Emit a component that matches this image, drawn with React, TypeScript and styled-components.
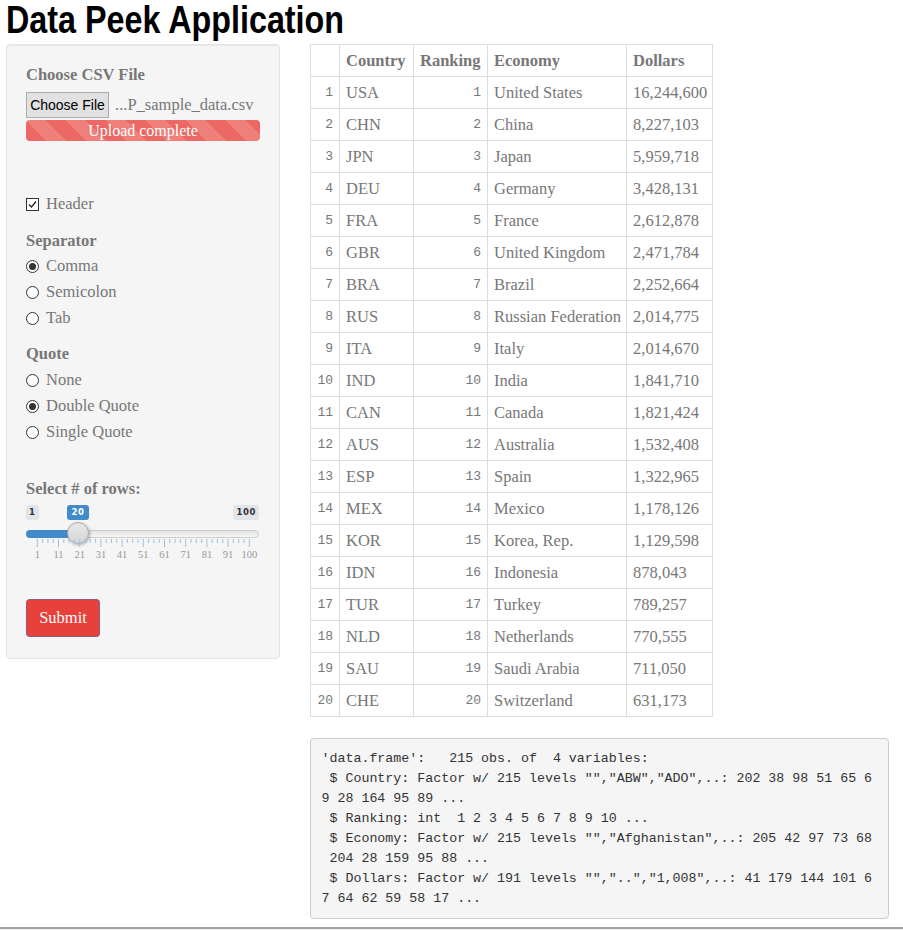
import React from "react";
import styled, { createGlobalStyle } from "styled-components";

const Global = createGlobalStyle`
  html, body { margin: 0; padding: 0; background: #fff; }
  body { font-family: "Liberation Serif", "Times New Roman", serif; color: #777; }
  * { box-sizing: border-box; }
`;

const Page = styled.div`
  width: 903px;
  padding: 0 6px;
`;

const Title = styled.h1`
  margin: 0;
  height: 44px;
  font-family: "Liberation Sans", Arial, sans-serif;
  font-size: 38px;
  line-height: 40px;
  font-weight: bold;
  color: #000;
  white-space: nowrap;
  transform: scaleX(0.85);
  transform-origin: 0 0;
`;

const Layout = styled.div`
  display: flex;
  align-items: flex-start;
  gap: 30px;
`;

const Sidebar = styled.form`
  width: 274px;
  background: #f5f5f5;
  border: 1px solid #e3e3e3;
  border-radius: 4px;
  box-shadow: inset 0 1px 1px rgba(0, 0, 0, 0.05);
  padding: 20px 19px 21px;
  display: flex;
  flex-direction: column;
`;

const Label = styled.div`
  font-weight: bold;
  font-size: 16.5px;
  line-height: 20px;
  color: #777;
`;

const FileRow = styled.div`
  display: flex;
  align-items: center;
  gap: 6px;
  margin-top: 7px;
`;

const FileButton = styled.span`
  width: 83px;
  height: 26px;
  display: flex;
  align-items: center;
  justify-content: center;
  font-family: "Liberation Sans", Arial, sans-serif;
  font-size: 14px;
  color: #000;
  background: #e1e1e1;
  border: 1px solid #adadad;
`;

const FileName = styled.span`
  font-size: 16.5px;
  color: #777;
`;

const Progress = styled.div`
  margin-top: 2px;
  height: 21px;
  border-radius: 4px;
  background-color: #eb6864;
  background-image: linear-gradient(
    45deg,
    rgba(255, 255, 255, 0.15) 25%,
    transparent 25%,
    transparent 50%,
    rgba(255, 255, 255, 0.15) 50%,
    rgba(255, 255, 255, 0.15) 75%,
    transparent 75%,
    transparent
  );
  background-size: 40px 40px;
  color: #fff;
  font-size: 16px;
  line-height: 21px;
  text-align: center;
`;

const Option = styled.label<{ $mt?: number }>`
  display: flex;
  align-items: center;
  gap: 7px;
  height: 20px;
  font-size: 16.5px;
  color: #777;
  margin-top: ${(p) => p.$mt ?? 0}px;
`;

const Box = styled.span`
  width: 13px;
  height: 13px;
  border: 1px solid #333;
  background: #fff;
  display: flex;
  align-items: center;
  justify-content: center;
`;

const Circle = styled.span<{ $on?: boolean }>`
  width: 13px;
  height: 13px;
  border-radius: 50%;
  border: 1px solid #333;
  background: #fff;
  display: flex;
  align-items: center;
  justify-content: center;
  &::after {
    content: "";
    width: 7px;
    height: 7px;
    border-radius: 50%;
    background: ${(p) => (p.$on ? "#333" : "transparent")};
  }
`;

const Group = styled.div<{ $mt: number }>`
  margin-top: ${(p) => p.$mt}px;
  display: flex;
  flex-direction: column;
`;

const Options = styled.div<{ $mt: number }>`
  margin-top: ${(p) => p.$mt}px;
  display: flex;
  flex-direction: column;
  gap: 6px;
`;

const Slider = styled.div`
  position: relative;
  height: 64px;
  width: 233px;
`;

const Bubble = styled.span<{ $active?: boolean }>`
  position: absolute;
  top: 6px;
  height: 15px;
  padding: 0 3px;
  border-radius: 3px;
  font-family: "DejaVu Sans", Verdana, sans-serif;
  font-size: 8.5px;
  font-weight: bold;
  line-height: 15px;
  letter-spacing: 0.6px;
  text-align: center;
  color: ${(p) => (p.$active ? "#fff" : "#333")};
  background: ${(p) => (p.$active ? "#428bca" : "#e1e4e9")};
`;

const Track = styled.div`
  position: absolute;
  left: 0;
  top: 31px;
  width: 233px;
  height: 8px;
  border-radius: 4px;
  background: linear-gradient(#e4e4e4, #f6f6f6);
  border: 1px solid #cfcfcf;
`;

const Fill = styled.div`
  position: absolute;
  left: 0;
  top: 31px;
  height: 8px;
  border-radius: 4px 0 0 4px;
  background: #428bca;
`;

const Handle = styled.div`
  position: absolute;
  top: 23px;
  width: 22px;
  height: 22px;
  border-radius: 50%;
  background: linear-gradient(#e8e8e8, #d6d6d6);
  border: 1px solid #aaa;
  box-shadow: 1px 1px 3px rgba(0, 0, 0, 0.3);
`;

const Ticks = styled.svg`
  position: absolute;
  left: 0;
  top: 40px;
`;

const TickLabel = styled.span`
  position: absolute;
  top: 51px;
  width: 24px;
  margin-left: -12px;
  text-align: center;
  font-size: 10.5px;
  line-height: 10px;
  color: #999;
`;

const Submit = styled.button`
  margin-top: 36px;
  width: 74px;
  height: 38px;
  flex: none;
  background: #e8403b;
  color: #fff;
  border: 1px dotted #2b7bd6;
  border-radius: 4px;
  font-family: "Liberation Serif", serif;
  font-size: 16.5px;
  padding: 0;
`;

const Main = styled.div`
  display: flex;
  flex-direction: column;
`;

const Table = styled.table`
  border-collapse: collapse;
  table-layout: fixed;
  width: 402px;
  font-size: 16.5px;
  color: #777;
  th,
  td {
    border: 1px solid #ddd;
    padding: 0 6px;
    white-space: nowrap;
    overflow: hidden;
  }
  th {
    height: 32px;
    text-align: left;
    font-weight: bold;
  }
  td {
    height: 32px;
  }
`;

const Num = styled.td`
  && {
    font-family: "Liberation Mono", "Courier New", monospace;
    font-size: 13px;
    text-align: right;
  }
`;

const Pre = styled.pre`
  margin: 21px 0 0;
  width: 579px;
  background: #f5f5f5;
  border: 1px solid #ccc;
  border-radius: 4px;
  padding: 9.5px 10.5px;
  font-family: "Liberation Mono", "Courier New", monospace;
  font-size: 13.3px;
  line-height: 20px;
  color: #333;
  white-space: pre;
`;

const Footer = styled.div`
  margin-top: 8px;
  border-top: 2px solid #a3a3a3;
  background: #f0f0f0;
  height: 20px;
  padding-left: 6px;
  overflow: hidden;
  font-family: "Liberation Mono", monospace;
  font-size: 13px;
  line-height: 15px;
  color: #c00000;
`;

const FooterText = styled.div`
  margin-top: -1px;
`;

const rows: [string, string, string][] = [
  ["USA", "United States", "16,244,600"],
  ["CHN", "China", "8,227,103"],
  ["JPN", "Japan", "5,959,718"],
  ["DEU", "Germany", "3,428,131"],
  ["FRA", "France", "2,612,878"],
  ["GBR", "United Kingdom", "2,471,784"],
  ["BRA", "Brazil", "2,252,664"],
  ["RUS", "Russian Federation", "2,014,775"],
  ["ITA", "Italy", "2,014,670"],
  ["IND", "India", "1,841,710"],
  ["CAN", "Canada", "1,821,424"],
  ["AUS", "Australia", "1,532,408"],
  ["ESP", "Spain", "1,322,965"],
  ["MEX", "Mexico", "1,178,126"],
  ["KOR", "Korea, Rep.", "1,129,598"],
  ["IDN", "Indonesia", "878,043"],
  ["TUR", "Turkey", "789,257"],
  ["NLD", "Netherlands", "770,555"],
  ["SAU", "Saudi Arabia", "711,050"],
  ["CHE", "Switzerland", "631,173"],
];

const preText = `'data.frame':   215 obs. of  4 variables:
 $ Country: Factor w/ 215 levels "","ABW","ADO",..: 202 38 98 51 65 6
9 28 164 95 89 ...
 $ Ranking: int  1 2 3 4 5 6 7 8 9 10 ...
 $ Economy: Factor w/ 215 levels "","Afghanistan",..: 205 42 97 73 68
 204 28 159 95 88 ...
 $ Dollars: Factor w/ 191 levels "","..","1,008",..: 41 179 144 101 6
7 64 62 59 58 17 ...`;

const tickStart = 11.3;
const tickEnd = 223.3;
const tickLabels = ["1", "11", "21", "31", "41", "51", "61", "71", "81", "91", "100"];

function SliderInput() {
  const lines = [];
  for (let i = 0; i <= 40; i++) {
    const x = tickStart + ((tickEnd - tickStart) * i) / 40;
    const major = i % 4 === 0;
    lines.push(
      <line key={i} x1={x} x2={x} y1={0} y2={major ? 8 : 4} stroke="#9dc1e3" strokeWidth={1} />
    );
  }
  const value = 20;
  const pos = tickStart + ((tickEnd - tickStart) * (value - 1)) / 99;
  return (
    <Slider>
      <Bubble style={{ left: 0 }}>1</Bubble>
      <Bubble $active style={{ left: pos - 11, width: 22 }}>20</Bubble>
      <Bubble style={{ right: 0 }}>100</Bubble>
      <Track />
      <Fill style={{ width: pos }} />
      <Handle style={{ left: pos - 11 }} />
      <Ticks width={233} height={9}>{lines}</Ticks>
      {tickLabels.map((t, i) => (
        <TickLabel key={t} style={{ left: tickStart + ((tickEnd - tickStart) * i) / 10 }}>
          {t}
        </TickLabel>
      ))}
    </Slider>
  );
}

export default function App() {
  return (
    <>
      <Global />
      <Page>
        <Title>Data Peek Application</Title>
        <Layout>
          <Sidebar>
            <Label>Choose CSV File</Label>
            <FileRow>
              <FileButton>Choose File</FileButton>
              <FileName>...P_sample_data.csv</FileName>
            </FileRow>
            <Progress>Upload complete</Progress>

            <Option $mt={53}>
              <Box>
                <svg width="9" height="9" viewBox="0 0 9 9">
                  <path d="M1 4.5 L3.5 7 L8 1.5" fill="none" stroke="#222" strokeWidth="1.3" />
                </svg>
              </Box>
              Header
            </Option>

            <Group $mt={17}>
              <Label>Separator</Label>
              <Options $mt={5}>
                <Option><Circle $on />Comma</Option>
                <Option><Circle />Semicolon</Option>
                <Option><Circle />Tab</Option>
              </Options>
            </Group>

            <Group $mt={16}>
              <Label>Quote</Label>
              <Options $mt={6}>
                <Option><Circle />None</Option>
                <Option><Circle $on />Double Quote</Option>
                <Option><Circle />Single Quote</Option>
              </Options>
            </Group>

            <Group $mt={37}>
              <Label>Select # of rows:</Label>
              <SliderInput />
            </Group>

            <Submit type="button">Submit</Submit>
          </Sidebar>

          <Main>
            <Table>
              <colgroup>
                <col style={{ width: 29 }} />
                <col style={{ width: 74 }} />
                <col style={{ width: 74 }} />
                <col style={{ width: 139 }} />
                <col style={{ width: 86 }} />
              </colgroup>
              <thead>
                <tr>
                  <th></th>
                  <th>Country</th>
                  <th>Ranking</th>
                  <th>Economy</th>
                  <th>Dollars</th>
                </tr>
              </thead>
              <tbody>
                {rows.map((r, i) => (
                  <tr key={r[0]}>
                    <Num>{i + 1}</Num>
                    <td>{r[0]}</td>
                    <Num>{i + 1}</Num>
                    <td>{r[1]}</td>
                    <td>{r[2]}</td>
                  </tr>
                ))}
              </tbody>
            </Table>
            <Pre>{preText}</Pre>
          </Main>
        </Layout>
      </Page>
      <Footer>
        <FooterText>for the input quote</FooterText>
      </Footer>
    </>
  );
}
